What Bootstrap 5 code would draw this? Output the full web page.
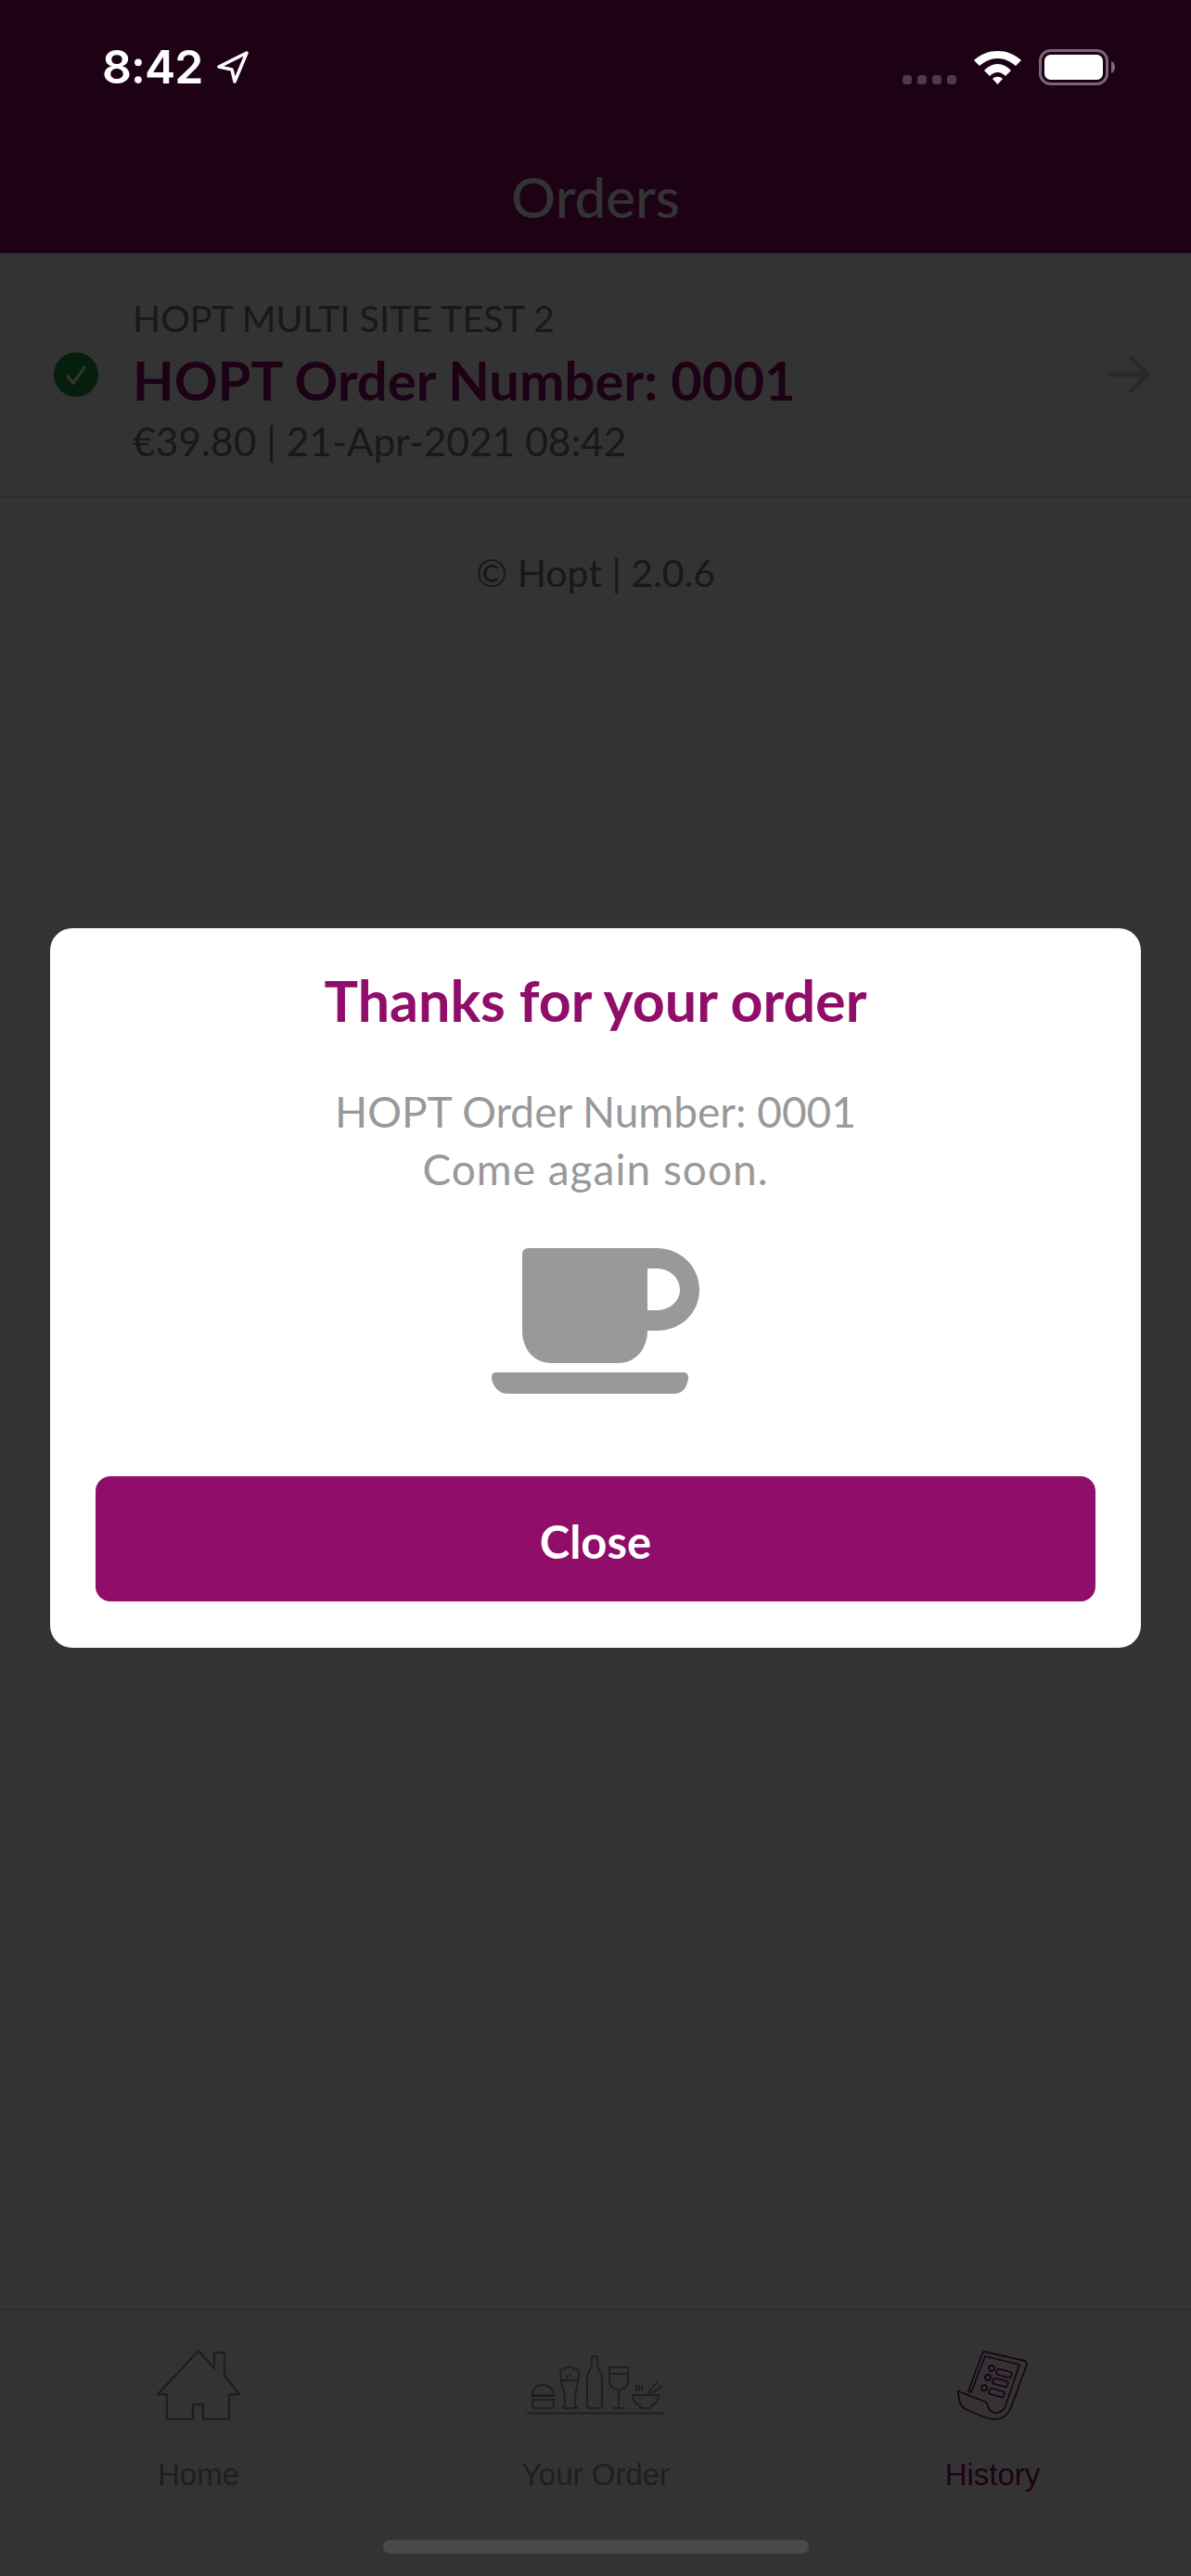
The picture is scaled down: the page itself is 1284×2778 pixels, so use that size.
<!DOCTYPE html>
<html lang="en">
<head>
    <meta charset="UTF-8">
    <meta name="viewport" content="width=device-width, initial-scale=1.0">
    <title>Orders</title>
    <link href="https://cdn.jsdelivr.net/npm/bootstrap@5.3.3/dist/css/bootstrap.min.css" rel="stylesheet">
    <style>
        body { background: #fff; font-family: "Lato", "Noto Sans", sans-serif; }
        .app-screen { height: 2778px; overflow: hidden; }
        .app-header { height: 273px; background: #900e6a; color: #fff; padding-top: 177px; font-size: 60px; font-weight: 500; line-height: 70px; }
        .order-row { height: 264px; padding: 0 45px 0 58px; border-bottom: 2px solid #ddd; gap: 37px; }
        .check-dot { width: 48px; height: 48px; background: #1c9c3c; }
        .order-info { padding-top: 12px; }
        .shop-name { font-size: 39.500px; line-height: 46px; color: #777; margin-top: 2px; }
        .order-no { font-size: 58px; line-height: 76px; font-weight: 700; color: #900e6a; margin-top: 6px; }
        .order-meta { font-size: 42.500px; line-height: 54px; color: #777; margin-top: 1px; }
        .copy-line { font-size: 41px; line-height: 50px; color: #777; padding-top: 56px; }
        .tab-bar { height: 288px; border-top: 2px solid #ddd; }
        .tab-icon { height: 80px; margin-top: 40px; }
        .tab-label { font-family: "Liberation Sans", sans-serif; font-size: 33px; line-height: 40px; color: #999; margin-top: 37px; }
        .tab-active { color: #900e6a; }
        .dim-layer { background: rgba(0, 0, 0, .8); z-index: 10; padding: 0 54px; }
        .thanks-box { background: #fff; border-radius: 24px; padding: 38px 49px 50px; }
        .thanks-title { font-size: 61px; line-height: 80px; font-weight: 700; color: #900e6a; margin: 0 0 49px; }
        .thanks-text { font-size: 46px; line-height: 62px; color: #999; }
        .again-line { letter-spacing: 1px; }
        .cup-icon { margin: 54px 0 89px; }
        .close-btn { height: 135px; padding-top: 12px; background: #900e6a; border: 0; border-radius: 16px; color: #fff; font-size: 49px; font-weight: 700; }
        .close-btn:hover { background: #900e6a; color: #fff; }
        .status-bar { z-index: 20; top: 0; left: 0; right: 0; height: 110px; }
        .clock { left: 110px; top: 42px; font-family: "Inter", sans-serif; font-size: 50px; line-height: 60px; font-weight: 600; color: #fff; letter-spacing: -1px; }
        .status-icon { left: 0; top: 0; }
        .home-pill { z-index: 20; left: 413px; top: 2739px; width: 459px; height: 15px; background: #494949; border-radius: 8px; }
    </style>
</head>
<body>
    <div class="app-screen position-relative d-flex flex-column">
        <div class="app-header text-center">Orders</div>

        <div class="flex-grow-1">
            <div class="order-row d-flex align-items-center">
                <div class="check-dot rounded-circle d-flex align-items-center justify-content-center flex-shrink-0">
                    <svg width="26" height="24" viewBox="0 0 26 24"><path d="M3 13l7 8L23 3" fill="none" stroke="#fff" stroke-width="3"/></svg>
                </div>
                <div class="order-info flex-grow-1">
                    <div class="shop-name">HOPT MULTI SITE TEST 2</div>
                    <div class="order-no">HOPT Order Number: 0001</div>
                    <div class="order-meta">€39.80 | 21-Apr-2021 08:42</div>
                </div>
                <svg width="45" height="42" viewBox="0 0 45 42" class="flex-shrink-0"><path d="M0 21H42M24 2l19 19-19 19" fill="none" stroke="#ccc" stroke-width="5"/></svg>
            </div>
            <div class="copy-line text-center">© Hopt | 2.0.6</div>
        </div>

        <div class="tab-bar row g-0">
            <div class="col-4 d-flex flex-column align-items-center">
                <div class="tab-icon d-flex align-items-center">
                    <svg width="90" height="76" viewBox="0 0 90 76" fill="none" stroke="#999" stroke-width="2.5" stroke-linejoin="round">
                        <path d="M45 1L62 20V3H73V28L89 48H78V75H50V59H39V75H11V48H1Z"/>
                    </svg>
                </div>
                <div class="tab-label">Home</div>
            </div>
            <div class="col-4 d-flex flex-column align-items-center">
                <div class="tab-icon d-flex align-items-center">
                    <svg width="148" height="64" viewBox="0 0 148 64" fill="none" stroke="#999" stroke-width="2" stroke-linejoin="round">
                        <path d="M0 62.5H148" stroke-width="2"/>
                        <path d="M6 43C6 36 11 32 17 32S29 36 29 43ZM4 44H31M5 48H30M6 48V53C6 56 8 57 10 57H25C27 57 29 56 29 53V48"/>
                        <path d="M36 20C36 15 38 14 41 14C44 12 48 12 50 14C54 14 56 16 56 20C56 30 52 38 52 47V55H54V57H39V55H41V47C41 38 36 30 36 20ZM37 27H55M43 21V25M47 20V24"/>
                        <path d="M70 1H76V10C76 16 81 17 81 24V54C81 56 80 57 78 57H68C66 57 65 56 65 54V24C65 17 70 16 70 10Z"/>
                        <path d="M89 13H109V28C109 34 104 37 99 37C94 37 89 34 89 28ZM89 20H109M99 37V55M92 57H106"/>
                        <path d="M114 43H142C142 49 138 53 134 54V57H122V54C118 53 114 49 114 43ZM129 43L141 28M132 43L146 33M121 32V39M124 32V39M118 32V39"/>
                    </svg>
                </div>
                <div class="tab-label">Your Order</div>
            </div>
            <div class="col-4 d-flex flex-column align-items-center">
                <div class="tab-icon d-flex align-items-center">
                    <svg width="76" height="76" viewBox="0 0 76 76" fill="none" stroke="#900e6a" stroke-width="1.8" stroke-linejoin="round">
                        <path d="M29 2L73 12C75 13 75 14 75 16L58 62C54 72 48 75 40 75C35 75 30 73 25 71L11 65C6 63 3 60 2 54L0.500 44.500L30 56C32 57 33 60 34 63C36 67 40 69 44 68C48 67 50 65 52 61L67 16L30 7L15 46L12 45L27 4C27.500 2 28 2 29 2Z"/>
                        <circle cx="37" cy="20" r="3"/><circle cx="33" cy="30" r="3"/><circle cx="29" cy="41" r="3"/>
                        <rect x="42" y="22" width="17" height="6.500" rx="3.200" transform="rotate(15 50 25)"/>
                        <rect x="38" y="32" width="17" height="6.500" rx="3.200" transform="rotate(15 46 35)"/>
                        <rect x="34" y="43" width="17" height="6.500" rx="3.200" transform="rotate(15 42 46)"/>
                    </svg>
                </div>
                <div class="tab-label tab-active">History</div>
            </div>
        </div>

        <div class="dim-layer position-absolute top-0 start-0 w-100 h-100 d-flex align-items-center">
            <div class="thanks-box w-100 text-center">
                <h5 class="thanks-title">Thanks for your order</h5>
                <div class="thanks-text">HOPT Order Number: 0001<br><span class="again-line">Come again soon.</span></div>
                <svg class="cup-icon d-block mx-auto" width="224" height="157" viewBox="0 0 224 157">
                    <path fill="#999" fill-rule="evenodd" d="M39 0H178C204 0 224 20 224 45C224 70 204 89 178 89H168C168 108 156 124 136 124H65C45 124 33 108 33 89V6C33 3 36 0 39 0ZM168 22V67H178C192 67 203 57 203 45C203 32 192 22 178 22Z"/>
                    <path fill="#999" d="M5 134H207C210 134 212 136 212 139C212 148 206 157 198 157H16C8 157 0 148 0 139C0 136 2 134 5 134Z"/>
                </svg>
                <button type="button" class="btn close-btn w-100">Close</button>
            </div>
        </div>

        <div class="status-bar position-absolute">
            <div class="clock position-absolute">8:42</div>
            <svg class="status-icon position-absolute" width="1284" height="110" viewBox="0 0 1284 110">
                <path d="M266 57L236 72L250 75L253 88Z" fill="none" stroke="#fff" stroke-width="3.500" stroke-linejoin="round"/>
                <g fill="#4f3a4b">
                    <rect x="973" y="81" width="10" height="10" rx="3.500"/><rect x="989" y="81" width="10" height="10" rx="3.500"/>
                    <rect x="1005" y="81" width="10" height="10" rx="3.500"/><rect x="1021" y="81" width="10" height="10" rx="3.500"/>
                </g>
                <g fill="#fff">
                    <path d="M1050 65C1058 58 1066 55 1075.500 55C1085 55 1093 58 1101 65L1095 71C1089 66 1083 63 1075.500 63C1068 63 1062 66 1056 71Z"/>
                    <path d="M1061 76C1065 72 1070 69 1075.500 69C1081 69 1086 72 1090 76L1084 82C1082 80 1079 78 1075.500 78C1072 78 1069 80 1067 82Z"/>
                    <path d="M1070 85C1073 82 1078 82 1081 85L1075.500 91Z"/>
                </g>
                <rect x="1121.500" y="54.500" width="72" height="36" rx="11" fill="none" stroke="#7a6676" stroke-width="3"/>
                <rect x="1126" y="59" width="63" height="27" rx="6.500" fill="#fff"/>
                <path d="M1198 66C1201 67 1202 70 1202 72.500C1202 75 1201 78 1198 79Z" fill="#7a6676"/>
            </svg>
        </div>
        <div class="home-pill position-absolute"></div>
    </div>
    <script src="https://cdn.jsdelivr.net/npm/bootstrap@5.3.3/dist/js/bootstrap.bundle.min.js"></script>
</body>
</html>
